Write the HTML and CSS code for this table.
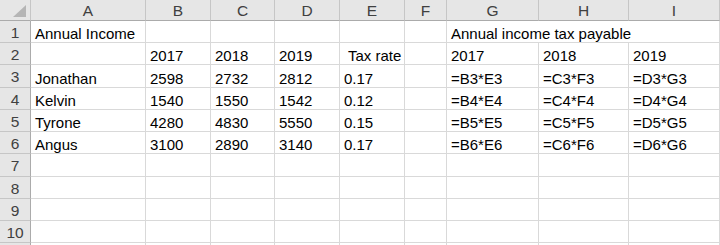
FILE: index.html
```html
<!DOCTYPE html>
<html>
<head>
<meta charset="utf-8">
<link rel="stylesheet" href="styles.css">
</head>
<body>
<div class="sheet">
  <div class="corner"><span class="tri"></span></div>
  <div class="ch">A</div><div class="ch">B</div><div class="ch">C</div><div class="ch">D</div><div class="ch">E</div><div class="ch">F</div><div class="ch">G</div><div class="ch">H</div><div class="ch">I</div>

  <div class="rh">1</div>
  <div class="c">Annual Income</div><div class="c"></div><div class="c"></div><div class="c"></div><div class="c"></div><div class="c"></div>
  <div class="c span3">Annual income tax payable</div>

  <div class="rh">2</div>
  <div class="c"></div><div class="c">2017</div><div class="c">2018</div><div class="c">2019</div><div class="c"> Tax rate</div><div class="c"></div><div class="c">2017</div><div class="c">2018</div><div class="c">2019</div>

  <div class="rh">3</div>
  <div class="c">Jonathan</div><div class="c">2598</div><div class="c">2732</div><div class="c">2812</div><div class="c">0.17</div><div class="c"></div><div class="c">=B3*E3</div><div class="c">=C3*F3</div><div class="c">=D3*G3</div>

  <div class="rh">4</div>
  <div class="c">Kelvin</div><div class="c">1540</div><div class="c">1550</div><div class="c">1542</div><div class="c">0.12</div><div class="c"></div><div class="c">=B4*E4</div><div class="c">=C4*F4</div><div class="c">=D4*G4</div>

  <div class="rh">5</div>
  <div class="c">Tyrone</div><div class="c">4280</div><div class="c">4830</div><div class="c">5550</div><div class="c">0.15</div><div class="c"></div><div class="c">=B5*E5</div><div class="c">=C5*F5</div><div class="c">=D5*G5</div>

  <div class="rh">6</div>
  <div class="c">Angus</div><div class="c">3100</div><div class="c">2890</div><div class="c">3140</div><div class="c">0.17</div><div class="c"></div><div class="c">=B6*E6</div><div class="c">=C6*F6</div><div class="c">=D6*G6</div>

  <div class="rh">7</div>
  <div class="c"></div><div class="c"></div><div class="c"></div><div class="c"></div><div class="c"></div><div class="c"></div><div class="c"></div><div class="c"></div><div class="c"></div>

  <div class="rh">8</div>
  <div class="c"></div><div class="c"></div><div class="c"></div><div class="c"></div><div class="c"></div><div class="c"></div><div class="c"></div><div class="c"></div><div class="c"></div>

  <div class="rh">9</div>
  <div class="c"></div><div class="c"></div><div class="c"></div><div class="c"></div><div class="c"></div><div class="c"></div><div class="c"></div><div class="c"></div><div class="c"></div>

  <div class="rh">10</div>
  <div class="c"></div><div class="c"></div><div class="c"></div><div class="c"></div><div class="c"></div><div class="c"></div><div class="c"></div><div class="c"></div><div class="c"></div>

  <div class="rh"></div>
  <div class="c"></div><div class="c"></div><div class="c"></div><div class="c"></div><div class="c"></div><div class="c"></div><div class="c"></div><div class="c"></div><div class="c"></div>
</div>
</body>
</html>
```

FILE: styles.css
```css
html, body {
  margin: 0;
  padding: 0;
  background: #ffffff;
  overflow: hidden;
}

.sheet {
  display: grid;
  grid-template-columns: 31px 115px 65px 64px 65px 65px 42px 92px 90px 91px;
  grid-template-rows: 21px 22px 22px 23px 22px 22px 22px 23px 22px 22px 22px 22px;
  width: 720px;
  height: 245px;
  overflow: hidden;
  font-family: "Liberation Sans", Arial, sans-serif;
  font-size: 15px;
  color: #000000;
}

.corner {
  position: relative;
  background: #e6e6e6;
  border-right: 1px solid #c6c6c6;
  border-bottom: 1px solid #ababab;
  box-sizing: border-box;
}

.tri {
  position: absolute;
  right: 4px;
  bottom: 3px;
  width: 0;
  height: 0;
  border-left: 13px solid transparent;
  border-bottom: 12px solid #b5b5b5;
}

.ch {
  background: #e6e6e6;
  border-right: 1px solid #c6c6c6;
  border-bottom: 1px solid #ababab;
  box-sizing: border-box;
  display: flex;
  align-items: center;
  justify-content: center;
  color: #404040;
  line-height: 17px;
  font-size: 15.5px;
  padding-top: 1px;
}

.rh {
  background: #e6e6e6;
  border-right: 1px solid #ababab;
  border-bottom: 1px solid #c6c6c6;
  box-sizing: border-box;
  display: flex;
  align-items: center;
  justify-content: center;
  color: #404040;
  line-height: 17px;
  font-size: 15.5px;
  padding-top: 1px;
}

.c {
  border-right: 1px solid #d9d9d9;
  border-bottom: 1px solid #d9d9d9;
  box-sizing: border-box;
  display: flex;
  align-items: flex-end;
  padding-left: 4px;
  line-height: 17px;
  white-space: pre;
  overflow: visible;
}

.span3 {
  grid-column: span 3;
}
```
